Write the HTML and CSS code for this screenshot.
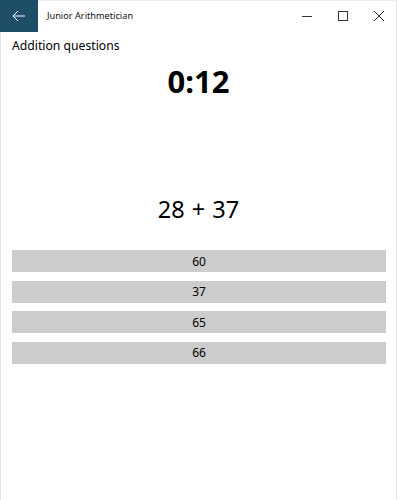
FILE: index.html
```html
<!DOCTYPE html>
<html>
<head>
<meta charset="utf-8">
<link rel="stylesheet" href="styles.css">
</head>
<body>
<div class="window">
  <div class="titlebar">
    <div class="back">
      <svg width="14" height="12" viewBox="0 0 14 12"><path d="M6 1 L1 6 L6 11 M1 6 H13" fill="none" stroke="#ffffff" stroke-width="1"/></svg>
    </div>
    <div class="title">Junior Arithmetician</div>
    <div class="caps">
      <div class="cap"><svg width="10" height="10" viewBox="0 0 10 10"><path d="M0 5.5 H10" stroke="#333" stroke-width="1"/></svg></div>
      <div class="cap"><svg width="10" height="10" viewBox="0 0 10 10"><rect x="0.5" y="0.5" width="9" height="9" fill="none" stroke="#333" stroke-width="1"/></svg></div>
      <div class="cap"><svg width="10" height="10" viewBox="0 0 10 10"><path d="M0 0 L10 10 M10 0 L0 10" stroke="#333" stroke-width="1"/></svg></div>
    </div>
  </div>
  <div class="content">
    <div class="heading">Addition questions</div>
    <div class="timer">0:12</div>
    <div class="question">28 + 37</div>
    <div class="answers">
      <div class="answer">60</div>
      <div class="answer">37</div>
      <div class="answer">65</div>
      <div class="answer">66</div>
    </div>
  </div>
</div>
</body>
</html>
```

FILE: styles.css
```css
html, body {
  margin: 0;
  padding: 0;
  background: #ffffff;
}
body {
  font-family: "Noto Sans", "Open Sans", sans-serif;
  color: #000;
}
.window {
  box-sizing: border-box;
  width: 397px;
  height: 500px;
  border-left: 1px solid #e3e3e3;
  border-right: 1px solid #e3e3e3;
  border-top: 1px solid #ececec;
  display: flex;
  flex-direction: column;
}
.titlebar {
  height: 31px;
  display: flex;
  align-items: center;
  margin-left: -1px;
  margin-right: -1px;
  margin-top: -1px;
}
.back {
  width: 38px;
  height: 32px;
  background: #1f4e69;
  display: flex;
  align-items: center;
  justify-content: center;
}
.title {
  margin-left: 9px;
  font-size: 9.2px;
  color: #111;
  flex: 1;
}
.caps {
  display: flex;
  height: 32px;
}
.cap {
  width: 36px;
  display: flex;
  align-items: center;
  justify-content: center;
}
.content {
  display: flex;
  flex-direction: column;
  padding: 0 10px 0 10px;
}
.heading {
  margin-top: 5px;
  padding-left: 1px;
  font-size: 12.2px;
  line-height: 20px;
}
.timer {
  margin-top: 5px;
  text-align: center;
  font-weight: bold;
  font-size: 31px;
  line-height: 40px;
}
.question {
  margin-top: 92px;
  text-align: center;
  font-size: 23.5px;
  line-height: 32px;
  word-spacing: 1px;
}
.answers {
  margin-top: 25px;
  display: flex;
  flex-direction: column;
  gap: 8.6px;
  padding-left: 1px;
}
.answer {
  height: 22px;
  background: #cccccc;
  display: flex;
  align-items: center;
  justify-content: center;
  font-size: 12px;
}
```
